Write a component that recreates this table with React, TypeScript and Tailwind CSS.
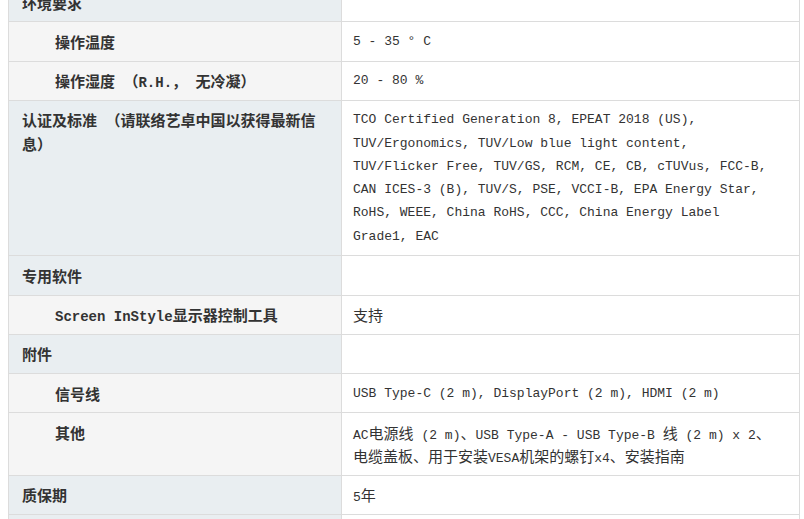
import React from "react";

type Row = { label: string[]; value?: string[]; sub?: boolean };

const CJK = /([\u3000-\u303f\u4e00-\u9fff\uff00-\uffef]+)/;

function Mixed({ text }: { text: string }) {
  const parts = text.split(CJK);
  return (
    <>
      {parts.map((p, i) =>
        CJK.test(p) ? (
          <span
            key={i}
            className="text-[15px] leading-[23.25px] align-baseline"
            style={{ fontFamily: '"Noto Sans CJK SC", sans-serif' }}
          >
            {p}
          </span>
        ) : (
          <span key={i} className="leading-[23.25px]">
            {p}
          </span>
        )
      )}
    </>
  );
}

function Lines({ lines }: { lines: string[] }) {
  return (
    <>
      {lines.map((l, i) => (
        <div key={i} className="h-[23.25px] whitespace-nowrap leading-[23.25px]">
          <Mixed text={l} />
        </div>
      ))}
    </>
  );
}

const rows: Row[] = [
  { label: ["环境要求"] },
  { label: ["操作温度"], sub: true, value: ["5 - 35 ° C"] },
  { label: ["操作湿度 （R.H.， 无冷凝）"], sub: true, value: ["20 - 80 %"] },
  {
    label: ["认证及标准 （请联络艺卓中国以获得最新信", "息）"],
    value: [
      "TCO Certified Generation 8, EPEAT 2018 (US),",
      "TUV/Ergonomics, TUV/Low blue light content,",
      "TUV/Flicker Free, TUV/GS, RCM, CE, CB, cTUVus, FCC-B,",
      "CAN ICES-3 (B), TUV/S, PSE, VCCI-B, EPA Energy Star,",
      "RoHS, WEEE, China RoHS, CCC, China Energy Label",
      "Grade1, EAC",
    ],
  },
  { label: ["专用软件"] },
  { label: ["Screen InStyle显示器控制工具"], sub: true, value: ["支持"] },
  { label: ["附件"] },
  { label: ["信号线"], sub: true, value: ["USB Type-C (2 m), DisplayPort (2 m), HDMI (2 m)"] },
  {
    label: ["其他"],
    sub: true,
    value: [
      "AC电源线 (2 m)、USB Type-A - USB Type-B 线 (2 m) x 2、",
      "电缆盖板、用于安装VESA机架的螺钉x4、安装指南",
    ],
  },
  { label: ["质保期"], value: ["5年"] },
  { label: [""] },
];

export default function App() {
  return (
    <div className="w-[804px] h-[519px] overflow-hidden bg-white">
      <div className="ml-2 -mt-[17px] w-[792px] border-l border-r border-[#dcdcdc] text-[#333]">
        {rows.map((r, i) => (
          <div key={i} className="flex border-b border-[#dcdcdc]">
            <div
              className={
                "w-[333px] shrink-0 border-r border-[#dcdcdc] py-[7.5px] pr-2 text-[14px] font-bold " +
                (r.sub ? "bg-[#f5f5f5] pl-[46px]" : "bg-[#e9eef1] pl-[13px]")
              }
              style={{ fontFamily: '"Liberation Mono", "Noto Sans CJK SC", monospace' }}
            >
              <Lines lines={r.label} />
            </div>
            <div
              className="flex-1 bg-white py-[7.5px] pl-[11px] pr-3 text-[13px]"
              style={{ fontFamily: '"Liberation Mono", "Noto Sans CJK SC", monospace' }}
            >
              {r.value ? <Lines lines={r.value} /> : <div className="h-[23.25px]" />}
            </div>
          </div>
        ))}
      </div>
    </div>
  );
}
